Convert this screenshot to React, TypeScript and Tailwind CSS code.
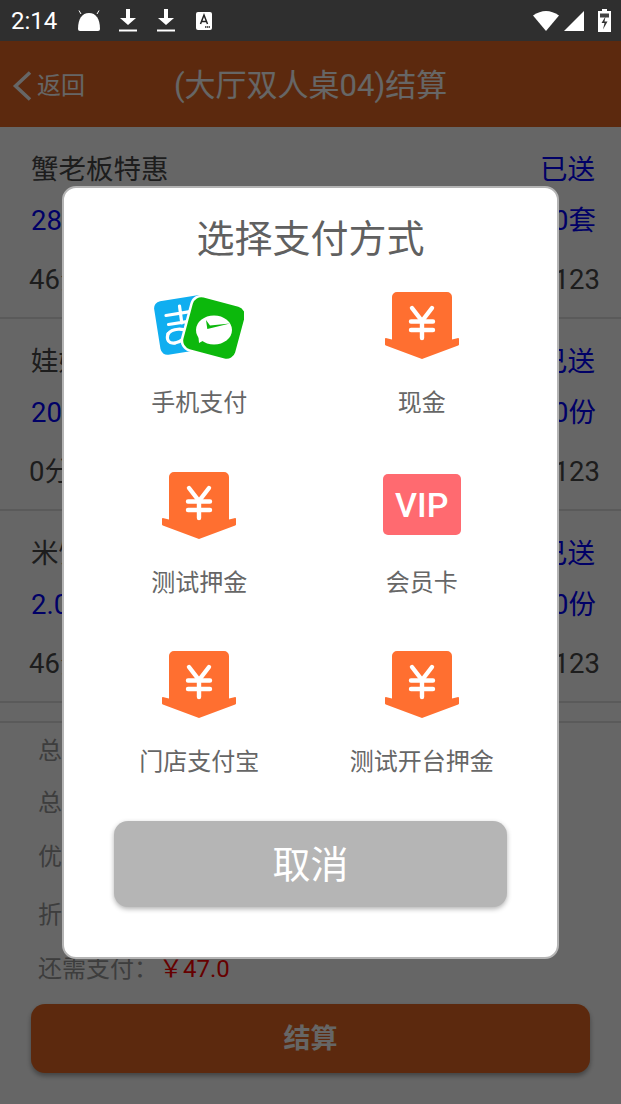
const FONT = "font-['Roboto','Noto_Sans_CJK_SC',sans-serif]";

function YuanIcon() {
  return (
    <svg width={74} height={67} viewBox="0 0 74 67">
      <path
        d="M7 5a5 5 0 0 1 5-5h50a5 5 0 0 1 5 5v42.500l6.200-1.400q.8 0 .8 1v5.400q0 .7-.8 1L37 67 .8 53.500q-.8-.3-.8-1v-5.400q0-1 .8-1L7 47.500z"
        fill="#ff6f30"
      />
      <g fill="none" stroke="#fff" strokeWidth={4.400} strokeLinecap="round" strokeLinejoin="round">
        <path d="M27 16l10 13 10-13" />
        <path d="M26 29.500h22M26 38h22M37 29v17" />
      </g>
    </svg>
  );
}

function PhonePayIcon() {
  return (
    <svg width={90} height={66} viewBox="0 0 90 66">
      <rect x={3} y={5} width={52} height={54} rx={7} fill="#10aef0" transform="rotate(-9 29 32)" />
      <g fill="none" stroke="#fff" strokeWidth={3.200} strokeLinecap="round">
        <path d="M12 22.500l24-3.800M14.500 31.500l18.500-2.800M25.500 13l2.300 17" />
        <path d="M14 41c4-6 15-6 23-2 5 3 11 8 17 11" />
        <path d="M21 50c6-1 12-6 14-13" />
        <path d="M14 41c-2 6 1 10 7 9" />
      </g>
      <rect
        x={32}
        y={7}
        width={56}
        height={56}
        rx={10}
        fill="#0cb80c"
        stroke="#fff"
        strokeWidth={2.500}
        transform="rotate(15 60 35)"
      />
      <ellipse cx={60} cy={37} rx={18} ry={14.500} fill="#fff" />
      <path d="M44 39l1 11 9-5z" fill="#fff" />
      <path d="M52 27l1.300 9L76 30.500 56 32.500z" fill="#0cb80c" />
    </svg>
  );
}

function VipIcon() {
  return (
    <div className="-mt-px flex h-[61px] w-[78px] items-center justify-center rounded-[5px] bg-[#ff6a70]">
      <span className="text-[34px] leading-none font-medium text-white font-['Roboto',sans-serif]">
        VIP
      </span>
    </div>
  );
}

function DownloadIcon() {
  return (
    <svg width={18} height={23} viewBox="0 0 18 23">
      <path d="M7 0h4v9h6l-8 7-8-7h6z" fill="#fff" />
      <path d="M0 20.500h18v2H0z" fill="#fff" />
    </svg>
  );
}

function StatusBar() {
  return (
    <div className="flex h-[41px] items-center bg-[#2f2f2f] pr-[10px] pl-[11px] text-white">
      <span className="w-[47px] text-[24px] leading-none">2:14</span>
      <svg width={22} height={21} viewBox="0 0 22 21" className="ml-[20px]">
        <path d="M3 4L1 .5M19 4l2-3.500" stroke="#fff" strokeWidth={1} />
        <path d="M0 19c0-10 4-16 11-16s11 6 11 16q0 2-2 2H2q-2 0-2-2z" fill="#fff" />
      </svg>
      <div className="ml-[19px]">
        <DownloadIcon />
      </div>
      <div className="ml-[20px]">
        <DownloadIcon />
      </div>
      <svg width={16} height={18} viewBox="0 0 16 18" className="ml-[21px]">
        <rect width={16} height={18} rx={2} fill="#fff" />
        <path d="M4.500 12L8 3l3.500 9M5.500 9.500h5" fill="none" stroke="#222" strokeWidth={1.500} />
        <path d="M9 15h5" stroke="#222" strokeWidth={1.500} strokeDasharray="1.500 .5" />
      </svg>
      <div className="ml-auto flex items-center">
        <svg width={26} height={21} viewBox="0 0 26 21">
          <path d="M0 5.500Q13-3.500 26 5.500L13 21z" fill="#fff" />
        </svg>
        <svg width={20} height={20} viewBox="0 0 20 20" className="ml-[5px]">
          <path d="M20 0v20H0z" fill="#fff" />
        </svg>
        <svg width={13} height={23} viewBox="0 0 13 23" className="ml-[14px]">
          <path d="M4 0h5v2h4v21H0V2h4z" fill="#fff" />
          <path d="M2 4.500h9v4H2z" fill="#444" />
          <path d="M7.500 7.500L3.500 14h3L5 20.500 9.500 12.500h-3z" fill="#333" />
        </svg>
      </div>
    </div>
  );
}

function Dish({ name, tag, price, count, left, right }: { name: string; tag: string; price: string; count: string; left: string; right: string }) {
  return (
    <div className="h-[192px] border-b-2 border-[#e0e0e0] pt-[22px] pr-[21px] pl-[30px]">
      <div className="flex h-[42px] items-center justify-between pr-[5px] pl-[1px] text-[27.500px] text-[#4a4a4a]">
        <span>{name}</span>
        <span className="text-[#0000ff]">{tag}</span>
      </div>
      <div className="mt-[9px] flex h-[42px] items-center justify-between pr-[4px] pl-[1px] text-[27.500px] text-[#0000ff]">
        <span>{price}</span>
        <span>{count}</span>
      </div>
      <div className="mt-[17px] flex h-[42px] items-center justify-between text-[27.500px] text-[#4a4a4a]">
        <span className="-ml-px">{left}</span>
        <span>{right}</span>
      </div>
    </div>
  );
}

const payMethods = [
  { label: "手机支付", icon: <PhonePayIcon /> },
  { label: "现金", icon: <YuanIcon /> },
  { label: "测试押金", icon: <YuanIcon /> },
  { label: "会员卡", icon: <VipIcon /> },
  { label: "门店支付宝", icon: <YuanIcon /> },
  { label: "测试开台押金", icon: <YuanIcon /> },
];

export default function App() {
  return (
    <div className={`relative h-[1104px] w-[621px] overflow-hidden bg-white ${FONT}`}>
      <StatusBar />
      <div className="flex h-[86px] items-center bg-[#e66823] pt-[4px] text-white">
        <svg width={20} height={30} viewBox="0 0 20 30" className="ml-[12px]">
          <path d="M18 1.500L3.500 15 18 28.500" fill="none" stroke="#fff" strokeWidth={3.500} />
        </svg>
        <span className="ml-[5px] text-[24px]">返回</span>
        <span className="ml-[89px] text-[31px]">(大厅双人桌04)结算</span>
      </div>

      <Dish name="蟹老板特惠" tag="已送" price="28.0元" count="1.0套" left="46分钟" right="123" />
      <Dish name="娃娃菜" tag="已送" price="20.0元" count="1.0份" left="0分钟" right="123" />
      <Dish name="米饭" tag="已送" price="2.0元" count="1.0份" left="46分钟" right="123" />

      <div className="mt-[18px] border-t-2 border-[#e0e0e0] pl-[38px] text-[24px] text-[#999]">
        <div className="mt-[11px] flex h-[34px] items-center">总金额：</div>
        <div className="mt-[18px] flex h-[34px] items-center">总优惠：</div>
        <div className="mt-[20px] flex h-[34px] items-center">优惠券：</div>
        <div className="mt-[24px] flex h-[34px] items-center">折扣：</div>
        <div className="mt-[20px] flex h-[34px] items-center">
          还需支付：<span className="ml-[1px] text-[#ff0000]">￥47.0</span>
        </div>
      </div>

      <div className="mx-[31px] mt-[18px] flex h-[69px] items-center justify-center rounded-[14px] bg-[#e66823] pt-[2px] text-[27px] font-bold text-white shadow-[0_3px_5px_rgba(0,0,0,0.35)]">
        结算
      </div>

      {/* dim layer + pay dialog */}
      <div className="absolute inset-x-0 top-[41px] bottom-0 bg-black/60">
        <div className="absolute top-[145px] left-[62px] h-[773px] w-[497px] rounded-[14px] border-2 border-[#b4b4b4] bg-white">
          <div className="mt-[26px] text-center text-[38px] leading-[50px] text-[#606060]">选择支付方式</div>
          <div className="mt-[28px] grid grid-cols-2 px-[24px]">
            {payMethods.map((m) => (
              <div key={m.label} className="flex h-[179.500px] flex-col items-center">
                <div className="flex h-[67px] items-center justify-center">{m.icon}</div>
                <div className="mt-[27px] text-[24px] leading-[34px] text-[#666]">{m.label}</div>
              </div>
            ))}
          </div>
          <div className="mx-[50px] mt-[-10px] flex h-[86px] items-center justify-center rounded-[14px] bg-[#b5b5b5] pt-[3px] text-[38px] text-white shadow-[0_2px_5px_rgba(0,0,0,0.3)]">
            取消
          </div>
        </div>
      </div>
    </div>
  );
}
